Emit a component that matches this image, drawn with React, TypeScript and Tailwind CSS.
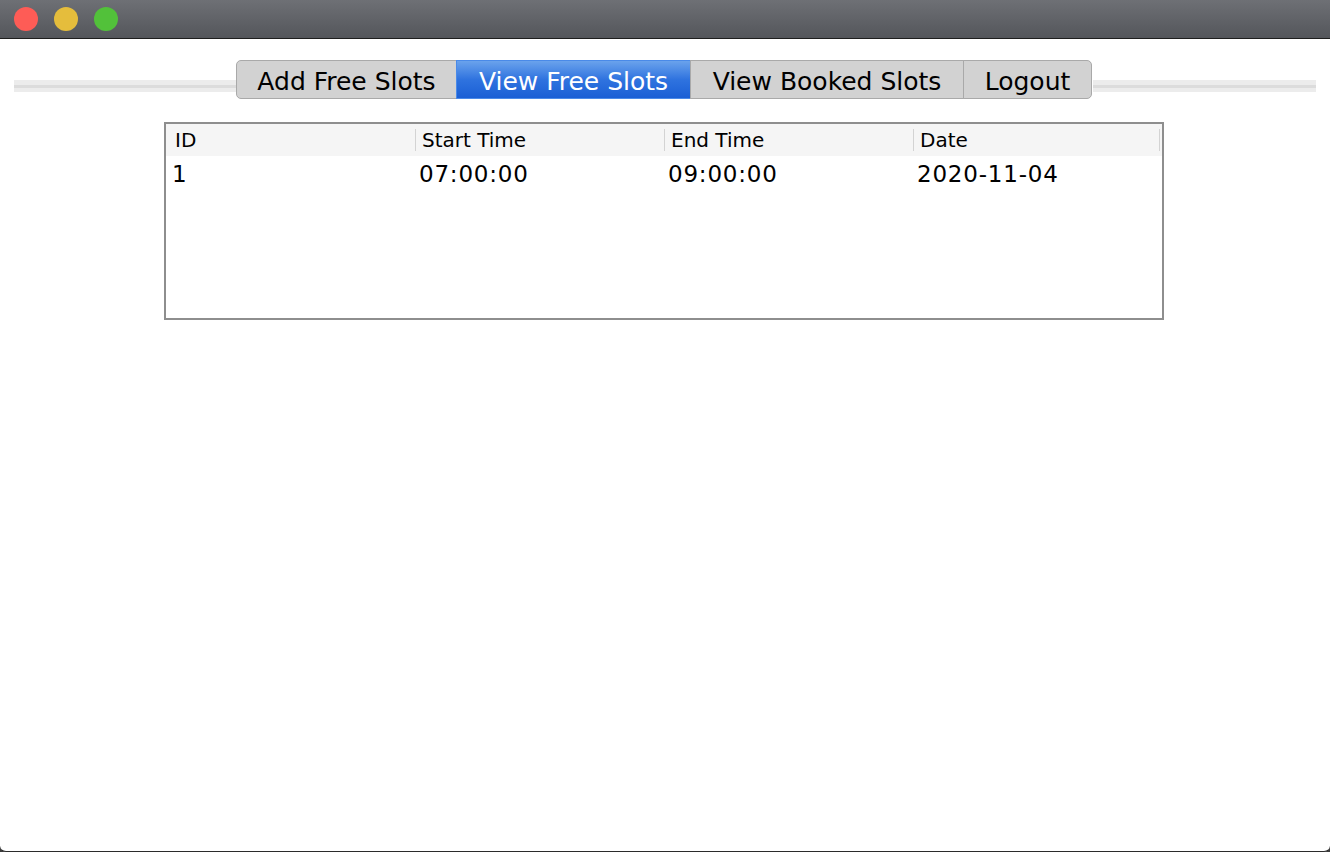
import React from 'react';

const tabs = [
  { label: 'Add Free Slots', w: 'w-[221px]', pos: 'first' },
  { label: 'View Free Slots', w: 'w-[235px]', pos: 'mid', active: true },
  { label: 'View Booked Slots', w: 'w-[274px]', pos: 'mid' },
  { label: 'Logout', w: 'w-[129px]', pos: 'last' },
];

const columns = ['ID', 'Start Time', 'End Time', 'Date'];
const rows = [['1', '07:00:00', '09:00:00', '2020-11-04']];

const Groove = () => (
  <div className="flex-1 h-[12px] mt-[20px] bg-[#ececec] flex flex-col justify-center">
    <div className="h-[3px] bg-[#dcdcdc]" />
  </div>
);

export default function App() {
  return (
    <div className="w-[1330px] h-[852px] bg-[#3c3c3c] overflow-hidden" style={{ fontFamily: '"DejaVu Sans", sans-serif' }}>
      <div className="h-full flex flex-col bg-white rounded-b-[6px] border-b border-[#2b2b2b]">
        {/* title bar */}
        <div className="h-[39px] shrink-0 flex items-center gap-[16px] pl-[14px] bg-gradient-to-b from-[#6e7075] to-[#54565b] border-b border-[#1e1e1e]">
          <span className="w-[24px] h-[24px] rounded-full bg-[#fe5c56]" />
          <span className="w-[24px] h-[24px] rounded-full bg-[#e5bd3c]" />
          <span className="w-[24px] h-[24px] rounded-full bg-[#52c13a]" />
        </div>

        {/* tabs */}
        <div className="flex items-start pl-[14px] pr-[14px] mt-[21px]">
          <Groove />
          <div className="flex -translate-x-px">
            {tabs.map((t) => (
              <div
                key={t.label}
                className={[
                  t.w,
                  'h-[39px] flex items-center justify-center pt-[3px] text-[25px] leading-none border',
                  t.active
                    ? 'bg-gradient-to-b from-[#6aa2ec] via-[#2f73df] to-[#1a5fd5] border-[#4a8ae8] text-white'
                    : 'bg-[#d2d2d2] border-[#a9a9a9] text-black',
                  t.pos === 'first' ? 'rounded-l-[5px]' : '',
                  t.pos === 'last' ? 'rounded-r-[5px]' : '',
                  t.pos !== 'first' ? '-ml-px' : '',
                ].join(' ')}
              >
                {t.label}
              </div>
            ))}
          </div>
          <Groove />
        </div>

        {/* table */}
        <div className="ml-[164px] mt-[23px] w-[1000px] h-[198px] border-2 border-[#8e8e8e] bg-white">
          <div className="grid grid-cols-4 h-[32px] bg-[#f5f5f5]">
            {columns.map((c, i) => (
              <div key={c} className="flex items-center">
                {i > 0 && <span className="w-px h-[22px] bg-[#d3d3d3]" />}
                <span className={`text-[20px] text-black ${i === 0 ? 'pl-[9px]' : 'pl-[6px]'}`}>{c}</span>
                {i === 3 && <span className="ml-auto mr-[2px] w-px h-[22px] bg-[#d3d3d3]" />}
              </div>
            ))}
          </div>
          {rows.map((r) => (
            <div key={r[0]} className="grid grid-cols-4 h-[36px] items-center">
              {r.map((v, i) => (
                <span key={i} className={`text-[23px] tracking-[0.8px] text-black ${i === 0 ? 'pl-[6px]' : 'pl-[4px]'}`}>
                  {v}
                </span>
              ))}
            </div>
          ))}
        </div>
      </div>
    </div>
  );
}
